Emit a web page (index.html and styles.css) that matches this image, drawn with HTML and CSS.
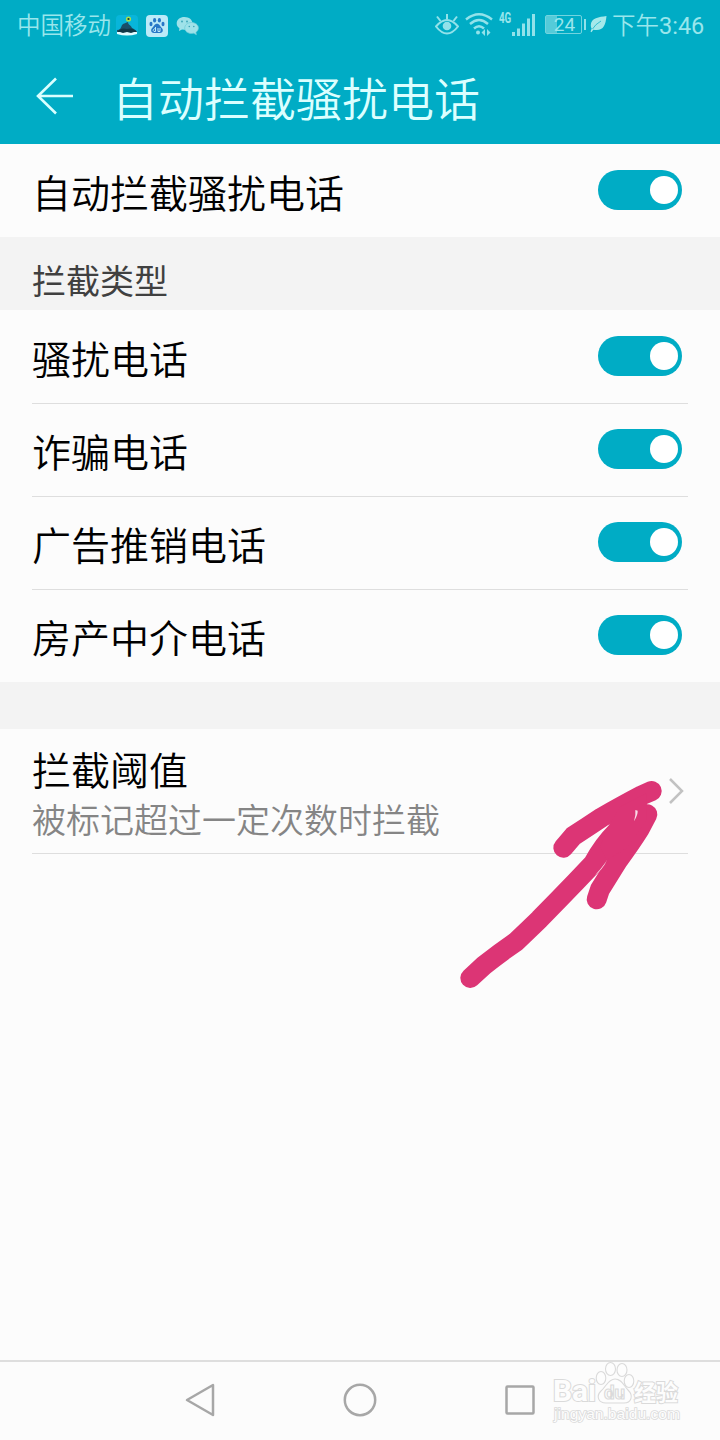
FILE: index.html
```html
<!DOCTYPE html>
<html lang="zh-CN">
<head>
<meta charset="utf-8">
<title>自动拦截骚扰电话</title>
<link rel="stylesheet" href="styles.css">
</head>
<body>
<div class="screen">
  <header class="header">
    <div class="status">
      <span class="carrier">中国移动</span>
      <svg class="ic-app" width="22" height="22" viewBox="0 0 22 22"><rect width="22" height="20" rx="4" fill="#08b5da"/><path d="M1 15c3 0 4-2 5-5 2-2 4-2 6-3 0 3 3 3 4 6 2 1 4 2 5 4H1z" fill="#1a5068"/><path d="M1 17q10-4 20 0v2q-10 3-20 0z" fill="#e2fbff"/><path d="M1 17q4-5 10-3 6-2 10 3l-3 0-3 1-4-1-4 1-3-1z" fill="#123847"/><circle cx="12.500" cy="4" r="2.600" fill="#a8de4a"/><circle cx="12.500" cy="4" r="1.100" fill="#123847"/></svg>
      <svg class="ic-paw" width="22" height="22" viewBox="0 0 22 22"><rect width="22" height="22" rx="4" fill="#bceaf8"/><g fill="#2877c7"><ellipse cx="5" cy="9" rx="1.500" ry="2.200"/><ellipse cx="8.600" cy="5.300" rx="1.600" ry="2.300"/><ellipse cx="13.400" cy="5.300" rx="1.600" ry="2.300"/><ellipse cx="17" cy="9" rx="1.500" ry="2.200"/><path d="M11 8.800c2.500 0 3 2.500 4.700 4 2.500 2.500.5 5.700-2 5.200h-5.400c-2.500.5-4.500-2.700-2-5.200 1.700-1.500 2.200-4 4.700-4z"/></g><path d="M9.500 12v4.500h-1.500a1.400 1.400 0 0 1 1.500-2.500M12 13v3.500h2V13" fill="none" stroke="#bceaf8"/></svg>
      <svg class="ic-chat" width="23" height="20" viewBox="0 0 23 20"><path d="M8.500 1C4 1 .7 3.700.7 7.400c0 2 1 3.700 2.700 4.800L3 15l3-1.500 2.500.3c4.500 0 8-2.800 8-6.400S13 1 8.500 1z" fill="#9fe2e9"/><path d="M15.500 6.500c-3.800 0-6.800 2.400-6.800 5.500s3 5.500 6.800 5.500l2.200-.3 2.700 1.500-.5-2.400c1.500-1 2.500-2.600 2.500-4.300 0-3.100-3-5.500-6.900-5.500z" fill="#9fe2e9" stroke="#6acbd8" stroke-width=".7"/><g fill="#3aa5b6"><circle cx="6" cy="5.500" r=".9"/><circle cx="11" cy="5.500" r=".9"/><circle cx="13.300" cy="10.500" r=".8"/><circle cx="17.800" cy="10.500" r=".8"/></g></svg>
      <span class="spacer"></span>
      <svg class="ic-eye" width="24" height="24" viewBox="0 0 24 24" fill="none" stroke="#92e2ea" stroke-width="2"><path d="M1 14.500Q6.500 8 12 8t11 6.500Q17.500 21.500 12 21.500T1 14.500z"/><circle cx="12" cy="14" r="4.300" fill="#92e2ea" stroke="none"/><path d="M12 7V2M5.500 9 2 4.500M18.500 9 22 4.500"/></svg>
      <svg class="ic-wifi" width="28" height="24" viewBox="0 0 28 24" fill="none" stroke="#92e2ea" stroke-width="2.400"><path d="M1 7.500Q14-3 27 7.500M5 12Q14 4 23 12M9 16.500Q14 12 19 16.500"/><circle cx="13" cy="20.500" r="2" fill="#92e2ea" stroke="none"/><path d="m20 17-3.500 3.500L20 24zM22 17l3.500 3.500L22 24z" fill="#92e2ea" stroke="none"/></svg>
      <span class="net">4G</span>
      <svg class="ic-signal" width="24" height="23" viewBox="0 0 24 23" fill="#92e2ea"><path d="M0 19h3v4H0zM5 15.500h3V23H5zM10 10.500h3V23h-3zM15 5.500h3V23h-3zM20 1h3v22h-3z"/></svg>
      <span class="battery"><span class="level">24</span></span>
      <svg class="ic-leaf" width="17" height="18" viewBox="0 0 17 18"><path d="M16.500 1C9 2 1 3 .8 10c0 1.500.2 2.500.9 3.500L.5 16.500l1 .7 1.700-2.500C13 16.500 15.500 11 16.500 1z" fill="#a5e9ea"/><path d="M2.500 14Q5 9.500 11 6" fill="none" stroke="#00acc5" stroke-width=".7"/></svg>
      <span class="clock">下午<span class="digits">3:46</span></span>
    </div>
    <div class="titlebar">
      <svg class="back" width="38" height="38" viewBox="0 0 38 38" fill="none" stroke="#d9ffff" stroke-width="2.600"><path d="M37 19H2M20 1.500 2 19l18 17.500"/></svg>
      <h1 class="title">自动拦截骚扰电话</h1>
    </div>
  </header>
  <main class="content">
    <div class="row"><span>自动拦截骚扰电话</span><i class="toggle"></i></div>
    <h2 class="section">拦截类型</h2>
    <div class="list">
      <div class="row"><span>骚扰电话</span><i class="toggle"></i></div>
      <div class="row"><span>诈骗电话</span><i class="toggle"></i></div>
      <div class="row"><span>广告推销电话</span><i class="toggle"></i></div>
      <div class="row"><span>房产中介电话</span><i class="toggle"></i></div>
    </div>
    <div class="gap"></div>
    <div class="threshold">
      <div class="labels"><span class="name">拦截阈值</span><span class="hint">被标记超过一定次数时拦截</span></div>
      <svg width="16" height="28" viewBox="0 0 16 28" fill="none" stroke="#c2c2c2" stroke-width="2.500"><path d="m2 2 12 12L2 26"/></svg>
    </div>
  </main>
  <nav class="nav">
    <svg width="34" height="36" viewBox="0 0 34 36"><path d="M30 3v30L4 18z"/></svg>
    <svg width="34" height="36" viewBox="0 0 34 36"><circle cx="17" cy="18" r="15.200"/></svg>
    <svg width="34" height="36" viewBox="0 0 34 36"><rect x="3.500" y="4.500" width="27" height="27" rx="1"/></svg>
  </nav>
  <svg class="arrow" width="280" height="250" viewBox="0 0 840 750">
    <g fill="none" stroke="#dc3575" stroke-width="60" stroke-linecap="round" stroke-linejoin="round">
      <path d="M91 654L132 616Q180 578 228 545Q265 510 298 478Q350 425 405 368L460 310Q490 255 530 215L590 135"/>
      <path d="M370 263L400 228Q440 202 485 172Q550 135 605 106L635 93"/>
      <path d="M470 418L480 388Q510 340 535 300Q575 245 600 205L622 163"/>
    </g>
    <path d="M505 200 540 140 620 100 620 180 560 265 500 300 480 260z" fill="#dc3575"/>
    <path d="M586 150L593 152Q594 164 582 184Q588 164 586 150ZM500 303Q488 328 465 345Q482 328 500 303Z" fill="#f9dce8"/>
  </svg>
  <svg class="watermark" width="134" height="64" viewBox="0 0 134 64">
    <g fill="#fdfdfd" stroke="#dadada" stroke-width="1.100">
      <text x="3" y="41" class="wm-latin" textLength="43" lengthAdjust="spacingAndGlyphs">Bai</text>
      <ellipse cx="51" cy="18" rx="4.800" ry="6.500"/><ellipse cx="60.500" cy="9" rx="5" ry="6.500"/><ellipse cx="72" cy="10" rx="5" ry="6.500"/><ellipse cx="79" cy="21" rx="4.800" ry="6.500"/>
      <path d="M65 19c7 0 9 7 13 11 6 6 3 13-4 13H56c-8 0-10-7-5-12 5-4 7-12 14-12z"/>
      <text x="54" y="39" class="wm-du" textLength="21" lengthAdjust="spacingAndGlyphs">du</text>
      <text x="84" y="41" class="wm-cjk" textLength="44" lengthAdjust="spacingAndGlyphs">经验</text>
    </g>
    <text x="4" y="59" class="wm-url" textLength="126" lengthAdjust="spacingAndGlyphs">jingyan.baidu.com</text>
  </svg>
</div>
</body>
</html>
```
FILE: styles.css
```css
* { box-sizing: border-box; }
body { margin: 0; font-family: Roboto, "Noto Sans CJK SC", sans-serif; font-weight: 350; }
.screen { position: relative; display: flex; flex-direction: column; width: 720px; height: 1440px; overflow: hidden; background: #fcfcfc; color: #000; }
.header { height: 144px; background: #00acc5; }
.status { display: flex; align-items: center; height: 48px; padding: 0 16px 0 17px; color: #99e6ec; }
.status svg { flex: none; }
.carrier { padding-top: 5px; font-size: 23.5px; line-height: 43px; }
.ic-app { margin: 3px 0 0 5px; }
.ic-paw { margin: 3px 0 0 8px; }
.ic-chat { margin: 3px 0 0 8px; }
.spacer { flex: 1; }
.ic-eye { margin-top: 0; }
.ic-wifi { margin: 0 0 0 6px; }
.net { margin: -13px 0 0 6px; width: 13px; font: 700 14px/14px Roboto, sans-serif; transform: scaleX(.7); transform-origin: left; }
.ic-signal { margin-top: 0; }
.battery { position: relative; width: 37px; height: 19px; margin: 0 13px 0 9px; padding: 1px; border: 1.500px solid #72d4df; border-radius: 2px; background: linear-gradient(90deg, #55cbd9 30%, transparent 30%); }
.battery::after { content: ""; position: absolute; right: -5px; top: 3px; width: 2px; height: 11px; background: #92e2ea; }
.level { display: block; margin-left: 2px; font-size: 19px; font-weight: 400; line-height: 15px; text-align: center; }
.ic-leaf { margin-left: -5px; }
.clock { width: 92px; margin-left: 5px; padding-top: 5px; font-size: 23.5px; line-height: 43px; white-space: nowrap; }
.digits { font-weight: 400; }
.titlebar { display: flex; align-items: center; height: 96px; padding-left: 36px; }
.title { margin: 8px 0 0 38px; font-size: 46px; line-height: 68px; font-weight: 350; color: #dbffff; }
.row { display: flex; align-items: center; justify-content: space-between; height: 93px; margin: 0 32px; padding: 0 6px 1px 0; font-size: 39px; line-height: 60px; }
.row span { padding-top: 9px; }
.list .row + .row { border-top: 1px solid #dedede; padding-bottom: 2px; }
.toggle { display: block; width: 84px; height: 40px; border-radius: 20px; padding: 6px 4px; background: #00acc5; }
.toggle::after { content: ""; display: block; width: 28px; height: 28px; margin-left: auto; border-radius: 50%; background: #fff; }
.section { height: 73px; margin: 0; padding: 18px 32px 0; background: #f3f3f3; color: #404040; font-size: 34px; line-height: 55px; font-weight: 400; }
.gap { height: 47px; background: #f3f3f3; }
.threshold { display: flex; align-items: center; justify-content: space-between; height: 125px; margin: 0 32px; padding-right: 4px; border-bottom: 1px solid #dedede; }
.labels { display: flex; flex-direction: column; padding-top: 8px; }
.name { font-size: 39px; line-height: 52px; }
.hint { font-size: 34px; line-height: 46px; color: #858585; }
.content { flex: 1; }
.nav { display: flex; justify-content: center; gap: 126px; height: 80px; padding-top: 20px; border-top: 2px solid #dedede; }
.nav svg { fill: none; stroke: #a7a7a7; stroke-width: 2.500; stroke-linejoin: round; }
.arrow { position: absolute; left: 440px; top: 760px; }
.watermark { position: absolute; left: 550px; top: 1360px; }
.wm-latin { font: 700 29px Roboto, sans-serif; paint-order: stroke; stroke-width: 2px; }
.wm-du { font: 700 18px Roboto, sans-serif; }
.wm-cjk { font: 700 23px "Noto Sans CJK SC", sans-serif; paint-order: stroke; stroke-width: 2px; }
.wm-url { font: 400 14px "Liberation Sans", sans-serif; fill: #fdfdfd; stroke: #dadada; stroke-width: 1.500px; paint-order: stroke; }
```
